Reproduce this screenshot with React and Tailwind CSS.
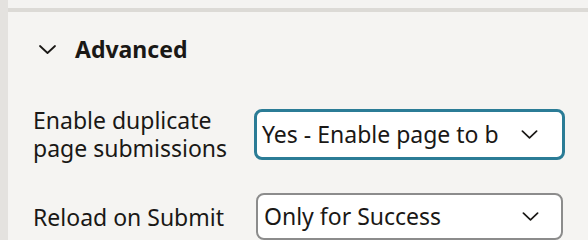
import React from 'react'

function Chevron({ className }) {
  return (
    <svg className={className} viewBox="0 0 18 9" fill="none" stroke="currentColor" strokeWidth="1.8" strokeLinecap="round" strokeLinejoin="round">
      <path d="M1.5 1l7.5 7 7.5-7" />
    </svg>
  )
}

export default function App() {
  return (
    <div
      className="w-[588px] h-[240px] flex overflow-hidden text-[#1a1816]"
      style={{ fontFamily: '"Noto Sans", sans-serif' }}
    >
      {/* left strip */}
      <div className="w-2 bg-[#e4e2df] shrink-0" />

      <div className="flex-1 flex flex-col">
        <div className="h-2 bg-[#f4f3f1]" />
        <div className="h-[4px] bg-[#dcdad6]" />

        <div className="flex-1 bg-[#f5f4f2] pl-[25px]">
          {/* Section header */}
          <div className="flex items-center h-[74px] pl-[5px]">
            <Chevron className="w-[19px] h-[9px]" />
            <span className="ml-[18px] text-[23px] font-bold">Advanced</span>
          </div>

          {/* Enable duplicate page submissions */}
          <div className="flex items-center mt-[20px]">
            <div className="w-[221px] text-[23px] leading-[28px]">
              <div>Enable duplicate</div>
              <div>page submissions</div>
            </div>
            <div className="flex items-center bg-white rounded-[8px] w-[311px] h-[51px] border-[3px] border-[#2b7c96] pl-[5px] pr-[24px]">
              <span className="flex-1 whitespace-nowrap text-[23px]">Yes - Enable page to b</span>
              <Chevron className="w-[17px] h-[9px] shrink-0" />
            </div>
          </div>

          {/* Reload on Submit */}
          <div className="flex items-center mt-[31px]">
            <div className="w-[223px] text-[23px] leading-[28px]">Reload on Submit</div>
            <div className="flex items-center bg-white rounded-[8px] w-[307px] h-[47px] border-2 border-[#8c8c8c] pl-[6px] pr-[22px]">
              <span className="flex-1 whitespace-nowrap text-[23px]">Only for Success</span>
              <Chevron className="w-[17px] h-[9px] shrink-0" />
            </div>
          </div>
        </div>
      </div>
    </div>
  )
}
